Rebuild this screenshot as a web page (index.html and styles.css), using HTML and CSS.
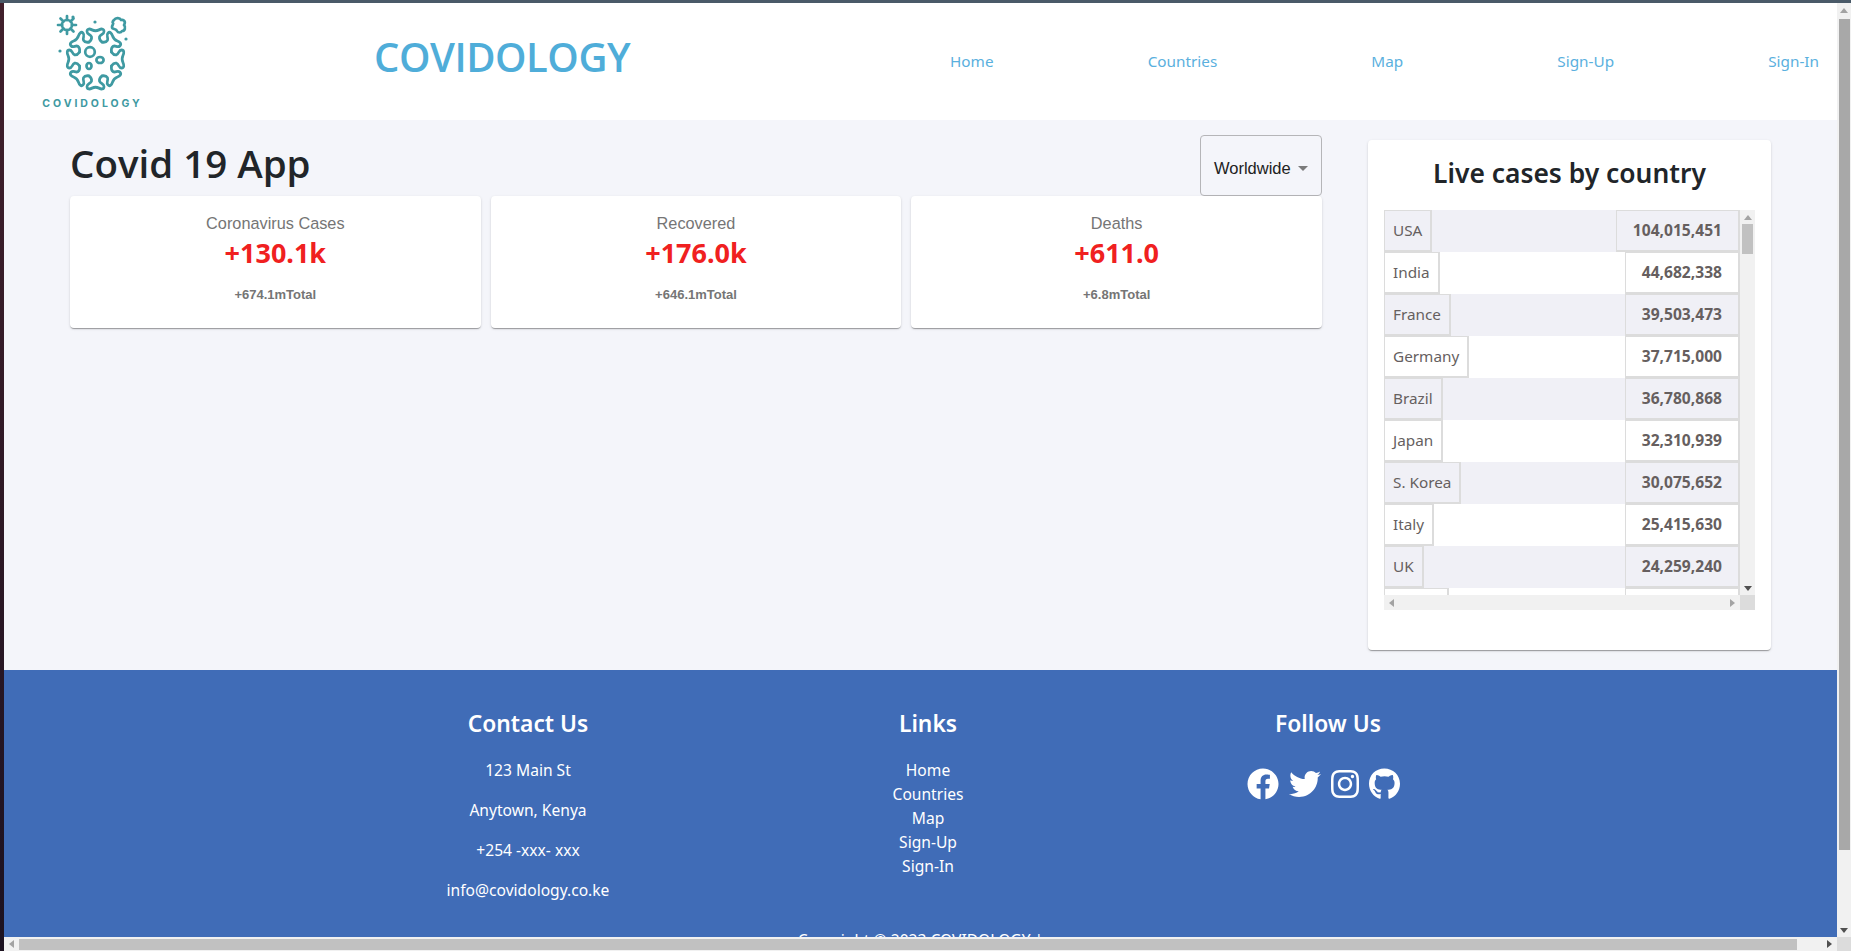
FILE: index.html
```html
<!DOCTYPE html>
<html lang="en">
<head>
<meta charset="utf-8">
<title>Covidology</title>
<link rel="stylesheet" href="styles.css">
</head>
<body>
<div class="window">
  <div class="page">
    <header class="topbar">
      <div class="logo">
        <svg class="logo-mark" viewBox="0 0 100 84" aria-hidden="true">
          <defs>
            <path id="spike" d="M-6.500-16C-4.500-17.500-3.500-19-4-21C-5-23.500-8.500-23-8.500-26C-8.500-29-5.500-28.500-3.500-27.500C-1.500-26.500 1.500-26.500 3.500-27.500C5.500-28.500 8.500-29 8.500-26C8.500-23 5-23.500 4-21C3.500-19 4.500-17.500 6.500-16"/>
          </defs>
          <g fill="none" stroke="#3f9aa2" stroke-width="2.700" stroke-linecap="round" stroke-linejoin="round">
            <g transform="translate(52.500 45) scale(1 1.060)">
              <use href="#spike"/>
              <use href="#spike" transform="rotate(45)"/>
              <use href="#spike" transform="rotate(90)"/>
              <use href="#spike" transform="rotate(135)"/>
              <use href="#spike" transform="rotate(180)"/>
              <use href="#spike" transform="rotate(225)"/>
              <use href="#spike" transform="rotate(270)"/>
              <use href="#spike" transform="rotate(315)"/>
            </g>
            <circle cx="47" cy="38" r="4.800"/>
            <ellipse cx="57" cy="46" rx="3.600" ry="3"/>
            <ellipse cx="46" cy="52" rx="2.500" ry="3"/>
            <circle cx="24" cy="11" r="5"/>
            <path d="M24 2v4M24 16v4M15 11h4M29 11h4M17.500 4.500l3 3M30.500 4.500l-3 3M17.500 17.500l3-3M30.500 17.500l-3-3"/>
            <path d="M71 6c2-3 6-2 7 0 3-1 5 2 3 5 2 2 1 6-2 6-1 2-4 2-5 0-1-3-5-1-5-4 0-2 2-3 1-4-1-1 0-2 1-3z"/>
          </g>
          <g fill="#3f9aa2">
            <circle cx="30" cy="3" r="1.600"/>
            <circle cx="52" cy="8" r="1.600"/>
            <circle cx="83" cy="25" r="1.600"/>
            <circle cx="17" cy="37" r="1.600"/>
          </g>
        </svg>
        <span class="logo-text">COVIDOLOGY</span>
      </div>
      <div class="brand">COVIDOLOGY</div>
      <nav class="nav">
        <a href="#">Home</a>
        <a href="#">Countries</a>
        <a href="#">Map</a>
        <a href="#">Sign-Up</a>
        <a href="#">Sign-In</a>
      </nav>
    </header>

    <main class="app">
      <section class="left">
        <div class="app-head">
          <h1>Covid 19 App</h1>
          <button class="select" type="button">Worldwide<span class="caret"></span></button>
        </div>
        <div class="stats">
          <article class="stat">
            <p class="stat-label">Coronavirus Cases</p>
            <p class="stat-value">+130.1k</p>
            <p class="stat-total">+674.1mTotal</p>
          </article>
          <article class="stat">
            <p class="stat-label">Recovered</p>
            <p class="stat-value">+176.0k</p>
            <p class="stat-total">+646.1mTotal</p>
          </article>
          <article class="stat">
            <p class="stat-label">Deaths</p>
            <p class="stat-value">+611.0</p>
            <p class="stat-total">+6.8mTotal</p>
          </article>
        </div>
      </section>

      <aside class="live">
        <h2>Live cases by country</h2>
        <div class="tablebox">
          <div class="rows">
            <div class="row"><span class="name">USA</span><span class="num">104,015,451</span></div>
            <div class="row"><span class="name">India</span><span class="num">44,682,338</span></div>
            <div class="row"><span class="name">France</span><span class="num">39,503,473</span></div>
            <div class="row"><span class="name">Germany</span><span class="num">37,715,000</span></div>
            <div class="row"><span class="name">Brazil</span><span class="num">36,780,868</span></div>
            <div class="row"><span class="name">Japan</span><span class="num">32,310,939</span></div>
            <div class="row"><span class="name">S. Korea</span><span class="num">30,075,652</span></div>
            <div class="row"><span class="name">Italy</span><span class="num">25,415,630</span></div>
            <div class="row"><span class="name">UK</span><span class="num">24,259,240</span></div>
            <div class="row"><span class="name">Russia</span><span class="num">21,958,100</span></div>
          </div>
          <div class="vbar small"><i class="up"></i><b></b><i class="down"></i></div>
          <div class="hbar small"><i class="lt"></i><i class="rt"></i></div>
          <div class="corner small"></div>
        </div>
      </aside>
    </main>

    <footer class="foot">
      <div class="foot-cols">
        <div class="foot-col">
          <h3>Contact Us</h3>
          <p>123 Main St</p>
          <p>Anytown, Kenya</p>
          <p>+254 -xxx- xxx</p>
          <p>info@covidology.co.ke</p>
        </div>
        <div class="foot-col">
          <h3>Links</h3>
          <ul>
            <li><a href="#">Home</a></li>
            <li><a href="#">Countries</a></li>
            <li><a href="#">Map</a></li>
            <li><a href="#">Sign-Up</a></li>
            <li><a href="#">Sign-In</a></li>
          </ul>
        </div>
        <div class="foot-col">
          <h3>Follow Us</h3>
          <div class="social">
            <svg class="ic-fb" viewBox="0 0 512 512" aria-label="Facebook"><path d="M504 256C504 119 393 8 256 8S8 119 8 256c0 123.78 90.69 226.38 209.25 245V327.69h-63V256h63v-54.64c0-62.15 37-96.48 93.67-96.48 27.14 0 55.52 4.84 55.52 4.84v61h-31.28c-30.8 0-40.41 19.12-40.41 38.73V256h68.78l-11 71.69h-57.78V501C413.31 482.38 504 379.78 504 256z"/></svg>
            <svg class="ic-tw" viewBox="0 0 512 512" aria-label="Twitter"><path d="M459.37 151.716c.325 4.548.325 9.097.325 13.645 0 138.72-105.583 298.558-298.558 298.558-59.452 0-114.68-17.219-161.137-47.106 8.447.974 16.568 1.299 25.34 1.299 49.055 0 94.213-16.568 130.274-44.832-46.132-.975-84.792-31.188-98.112-72.772 6.498.974 12.995 1.624 19.818 1.624 9.421 0 18.843-1.3 27.614-3.573-48.081-9.747-84.143-51.98-84.143-102.985v-1.299c13.969 7.797 30.214 12.67 47.431 13.319-28.264-18.843-46.781-51.005-46.781-87.391 0-19.492 5.197-37.36 14.294-52.954 51.655 63.675 129.3 105.258 216.365 109.807-1.624-7.797-2.599-15.918-2.599-24.04 0-57.828 46.782-104.934 104.934-104.934 30.213 0 57.502 12.67 76.67 33.137 23.715-4.548 46.456-13.645 66.599-25.665-7.798 24.366-24.366 44.833-46.132 57.827 21.117-2.273 41.584-8.122 60.426-16.243-14.292 20.791-32.161 39.308-52.628 54.253z"/></svg>
            <svg class="ic-ig" viewBox="0 0 448 512" aria-label="Instagram"><path d="M224.1 141c-63.6 0-114.9 51.3-114.9 114.9s51.3 114.9 114.9 114.9S339 319.5 339 255.9 287.7 141 224.1 141zm0 189.6c-41.1 0-74.7-33.5-74.7-74.7s33.5-74.7 74.7-74.7 74.7 33.5 74.7 74.7-33.6 74.7-74.7 74.7zm146.4-194.3c0 14.9-12 26.8-26.8 26.8-14.9 0-26.8-12-26.8-26.8s12-26.8 26.8-26.8 26.8 12 26.8 26.8zm76.1 27.2c-1.7-35.9-9.9-67.7-36.2-93.9-26.2-26.2-58-34.4-93.9-36.2-37-2.1-147.9-2.1-184.9 0-35.8 1.7-67.6 9.9-93.9 36.1s-34.4 58-36.2 93.9c-2.1 37-2.1 147.9 0 184.9 1.7 35.9 9.9 67.7 36.2 93.9s58 34.4 93.9 36.2c37 2.1 147.9 2.1 184.9 0 35.9-1.7 67.7-9.9 93.9-36.2 26.2-26.2 34.4-58 36.2-93.9 2.1-37 2.1-147.8 0-184.8zM398.8 388c-7.8 19.6-22.9 34.7-42.6 42.6-29.5 11.7-99.5 9-132.1 9s-102.7 2.6-132.1-9c-19.6-7.8-34.7-22.9-42.6-42.6-11.7-29.5-9-99.5-9-132.1s-2.6-102.7 9-132.1c7.8-19.6 22.9-34.7 42.6-42.6 29.5-11.7 99.5-9 132.1-9s102.7-2.6 132.1 9c19.6 7.8 34.7 22.9 42.6 42.6 11.7 29.5 9 99.5 9 132.1s2.7 102.7-9 132.1z"/></svg>
            <svg class="ic-gh" viewBox="0 0 496 512" aria-label="GitHub"><path d="M165.9 397.4c0 2-2.3 3.6-5.2 3.6-3.3 0-5.6-1.6-5.6-3.6 0-2 2.3-3.6 5.2-3.6 3-.3 5.6 1.3 5.6 3.6zm-31.1-4.5c-.7 2 1.3 4.3 4.3 4.9 2.6 1 5.6 0 6.2-2s-1.3-4.3-4.3-5.2c-2.6-.7-5.5.3-6.2 2.3zm44.2-1.7c-2.9.7-4.9 2.6-4.6 4.9.3 2 2.9 3.3 5.9 2.6 2.9-.7 4.9-2.6 4.6-4.6-.3-1.9-3-3.2-5.9-2.9zM244.8 8C106.1 8 0 113.3 0 252c0 110.9 69.8 205.8 169.5 239.2 12.8 2.3 17.3-5.6 17.3-12.1 0-6.2-.3-40.4-.3-61.4 0 0-70 15-84.7-29.8 0 0-11.4-29.1-27.8-36.6 0 0-22.9-15.7 1.6-15.4 0 0 24.9 2 38.6 25.8 21.9 38.6 58.6 27.5 72.9 20.9 2.3-16 8.8-27.1 16-33.7-55.9-6.2-112.3-14.3-112.3-110.5 0-27.5 7.6-41.3 23.6-58.9-2.6-6.5-11.1-33.3 2.6-67.9 20.9-6.5 69 27 69 27 20-5.6 41.5-8.5 62.8-8.5s42.8 2.9 62.8 8.5c0 0 48.1-33.6 69-27 13.7 34.7 5.2 61.4 2.6 67.9 16 17.7 25.8 31.5 25.8 58.9 0 96.5-58.9 104.2-114.8 110.5 9.2 7.9 17 22.9 17 46.4 0 33.7-.3 75.4-.3 83.6 0 6.5 4.6 14.4 17.3 12.1C428.2 457.8 496 362.9 496 252 496 113.3 383.5 8 244.8 8z"/></svg>
          </div>
        </div>
      </div>
      <p class="copy">Copyright © 2023 COVIDOLOGY |</p>
    </footer>
  </div>
  <div class="vbar page-bar"><i class="up"></i><b></b><i class="down"></i></div>
  <div class="hbar page-bar"><i class="lt"></i><b></b><i class="rt"></i></div>
  <div class="corner page-bar"></div>
</div>
</body>
</html>
```
FILE: styles.css
```css
* { box-sizing: border-box; }
html, body { margin: 0; height: 100%; overflow: hidden; }
body {
  background: linear-gradient(#42202c, #1c1220);
  padding: 3px 0 0 4px;
  font-family: "Noto Sans", sans-serif;
  color: #212529;
  position: relative;
}
body::before {
  content: "";
  position: absolute;
  left: 0; top: 0; right: 0;
  height: 3px;
  background: #4a5a68;
}
.window { position: relative; width: 1847px; height: 948px; overflow: hidden; }
.page { width: 1833px; height: 934px; overflow: hidden; background: #f4f5fa; display: flex; flex-direction: column; }

.topbar { height: 117px; flex: none; background: #fff; display: flex; align-items: flex-start; }
.logo { width: 140px; flex: none; display: flex; flex-direction: column; align-items: center; padding: 11px 0 0 37px; }
.logo-mark { width: 100px; height: 84px; display: block; flex: none; }
.logo-text { font: 700 10.500px/12px "Inter", sans-serif; letter-spacing: 2.950px; color: #3f9aa2; white-space: nowrap; }
.brand { margin: 31px 0 0 230px; width: 576px; flex: none; font-family: "Open Sans", sans-serif; font-size: 40px; font-weight: 600; color: #4fadd9; line-height: 46px; letter-spacing: -.45px; }
.nav { flex: 1; display: flex; justify-content: space-between; margin-top: 48px; padding-right: 18px; font-size: 15.300px; }
.nav a { color: #5ab0de; text-decoration: none; }

.app { height: 550px; flex: none; display: flex; align-items: flex-start; padding: 15px 0 0 66px; }
.left { width: 1252px; flex: none; }
.app-head { height: 61px; display: flex; justify-content: space-between; align-items: center; }
.app-head h1 { margin: 0; font-family: "Open Sans", sans-serif; font-size: 38.500px; font-weight: 600; line-height: 1.2; position: relative; top: -2px; }
.select { width: 122px; height: 61px; padding: 6px 0 0 13px; display: flex; align-items: center; background: transparent; border: 1px solid #b5b5b8; border-radius: 4px; font: 16.500px "Liberation Sans", sans-serif; color: #212121; }
.caret { margin-left: 7px; width: 0; height: 0; border: 5px solid transparent; border-top-color: #7b7b7b; border-bottom: 0; }
.stats { display: grid; grid-template-columns: repeat(3, 1fr); gap: 10px; }
.stat { height: 132px; background: #fff; border-radius: 4px; text-align: center; padding-top: 17px; box-shadow: 0 2px 1px -1px rgba(0,0,0,.2), 0 1px 1px rgba(0,0,0,.14), 0 1px 3px rgba(0,0,0,.12); }
.stat p { margin: 0; }
.stat-label { font: 16.300px/20px "Liberation Sans", sans-serif; color: #757575; }
.stat-value { font-size: 27px; line-height: 36px; font-weight: 700; color: #f02020; margin-top: 2px !important; }
.stat-total { font: 700 13px/16px "Liberation Sans", sans-serif; color: #757575; margin-top: 16px !important; }

.live { margin: 5px 0 0 46px; width: 403px; height: 510px; flex: none; background: #fff; border-radius: 4px; padding: 0 16px; box-shadow: 0 2px 1px -1px rgba(0,0,0,.2), 0 1px 1px rgba(0,0,0,.14), 0 1px 3px rgba(0,0,0,.12); }
.live h2 { margin: 0; height: 70px; line-height: 66px; text-align: center; font-size: 26.400px; font-weight: 600; }
.tablebox { position: relative; height: 400px; width: 371px; overflow: hidden; background: #f1f1f1; }
.rows { width: 356px; height: 385px; overflow: hidden; background: #fff; }
.row { display: flex; justify-content: space-between; height: 42px; background: #fff; }
.row:nth-child(odd) { background: #f0f0f6; }
.name, .num { border: 1px solid #dcdcdc; border-right-width: 2px; border-bottom-width: 2px; font-size: 15.300px; line-height: 39px; color: #665f5f; white-space: nowrap; }
.name { padding: 0 8px; }
.num { padding: 0 16px; min-width: 115px; text-align: right; font-weight: 700; font-size: 15.600px; }

.foot { flex: 1; background: #406cb7; color: #fff; text-align: center; overflow: hidden; }
.foot-cols { display: grid; grid-template-columns: repeat(3, 400px); margin-left: 324px; padding-top: 37px; }
.foot-col h3 { margin: 0 0 17px; font-size: 22.800px; line-height: 34px; font-weight: 600; }
.foot-col p { margin: 0 0 16px; font-size: 15.600px; line-height: 24px; }
.foot-col ul { margin: 0; padding: 0; list-style: none; font-size: 15.600px; line-height: 24px; }
.foot-col a { color: #fff; text-decoration: none; }
.social { display: flex; justify-content: center; gap: 10px; margin-top: 27px; padding-right: 10px; }
.social svg { height: 32px; fill: #fff; display: block; }
.ic-fb, .ic-tw { width: 32px; }
.ic-ig { width: 28px; }
.ic-gh { width: 31px; }
.copy { margin: 10px 0 0; font-size: 15.600px; line-height: 24px; }

.vbar, .hbar, .corner { position: absolute; background: #f1f1f1; }
.vbar { right: 0; top: 0; display: flex; flex-direction: column; align-items: center; justify-content: space-between; }
.hbar { left: 0; bottom: 0; display: flex; align-items: center; justify-content: space-between; }
.corner { right: 0; bottom: 0; background: #dcdcdc; }
.vbar b, .hbar b { display: block; background: #c1c1c1; }
.vbar i, .hbar i { display: block; width: 0; height: 0; border-style: solid; border-color: transparent; }
.up { border-width: 0 4px 5px; border-bottom-color: #a3a3a3 !important; margin-top: 5px; }
.down { border-width: 5px 4px 0; border-top-color: #505050 !important; margin-bottom: 4px; }
.lt { border-width: 4px 5px 4px 0; border-right-color: #a3a3a3 !important; margin-left: 5px; }
.rt { border-width: 4px 0 4px 5px; border-left-color: #a3a3a3 !important; margin-right: 5px; }

.vbar.page-bar { width: 14px; height: 934px; }
.hbar.page-bar { height: 14px; width: 1833px; }
.corner.page-bar { width: 14px; height: 14px; }
.vbar.page-bar b { width: 11px; height: 831px; margin: 6px 0 auto; background: #a8a8a8; }
.hbar.page-bar b { height: 11px; width: 1788px; margin: 1px 30px 0 5px; }
.hbar.page-bar .rt { border-left-color: #505050 !important; }

.vbar.small { width: 15px; height: 385px; }
.hbar.small { height: 15px; width: 356px; }
.corner.small { width: 15px; height: 15px; }
.vbar.small b { width: 11px; height: 30px; margin-bottom: auto; margin-top: 4px; }
```
